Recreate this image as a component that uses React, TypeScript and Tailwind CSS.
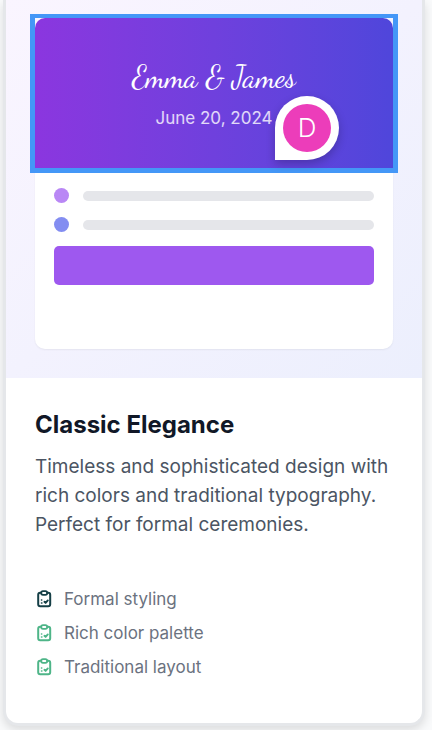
const features = [
  { label: "Formal styling", tone: "text-[#153f46]" },
  { label: "Rich color palette", tone: "text-[#4eb588]" },
  { label: "Traditional layout", tone: "text-[#4eb588]" },
];

function ClipboardIcon({ tone }: { tone: string }) {
  return (
    <svg
      viewBox="0 0 16 20"
      className={`h-5 w-4 shrink-0 ${tone}`}
      fill="none"
      stroke="currentColor"
      strokeWidth="2"
      strokeLinecap="round"
      strokeLinejoin="round"
      aria-hidden="true"
    >
      <path d="M5 3.8H4.2C3 3.8 2.2 4.6 2.2 5.8v9.4c0 1.200.8 2 2 2h8c1.200 0 2-.8 2-2V5.800c0-1.200-.8-2-2-2H11.400" />
      <rect x="5.2" y="2.200" width="6" height="3.600" rx="1.800" strokeWidth="1.800" />
      <path d="M8.400 12.800l1.200 1.100 2.200-2.500" strokeWidth="1.900" />
      <path d="M5.500 11h.2M5.500 14h.4" strokeWidth="1.600" />
    </svg>
  );
}

function CommentPin() {
  return (
    <div className="absolute top-[78px] left-[240px] flex size-16 items-center justify-center rounded-full rounded-bl-none bg-white shadow-[0_4px_10px_rgba(0,0,0,0.22)]">
      <div className="flex size-12 items-center justify-center rounded-full bg-[#ec3dba] text-[26px] leading-8 font-light text-white">
        D
      </div>
    </div>
  );
}

function Preview() {
  return (
    <div className="bg-linear-to-br from-[#faf5ff] to-[#eceffd] px-[29px] pt-[18px] pb-[29px]">
      <div className="h-[331px] rounded-[10px] bg-white shadow-[0_1px_2px_rgba(0,0,0,0.06)]">
        <div className="relative z-10">
          <div className="flex h-[150px] flex-col items-center rounded-t-[10px] bg-linear-to-r from-[#8b36df] to-[#4f46db] pt-10 text-center">
            <p className="font-['Dancing_Script','Liberation_Serif',cursive] text-[30px] leading-[38px] text-white">
              Emma &amp; James
            </p>
            <p className="mt-[10px] text-[17px] leading-6 text-white/80">June 20, 2024</p>
          </div>
          <div className="pointer-events-none absolute -top-1 -right-[5px] -bottom-[5px] -left-[5px] border-[5px] border-t-4 border-[#4497f7]" />
          <CommentPin />
        </div>
        <div className="flex flex-col gap-[14px] px-[19px] pt-5">
          <div className="flex items-center gap-[14px]">
            <span className="size-[15px] rounded-full bg-[#b987f5]" />
            <span className="h-[10px] flex-1 rounded-full bg-[#e5e6ea]" />
          </div>
          <div className="flex items-center gap-[14px]">
            <span className="size-[15px] rounded-full bg-[#838df1]" />
            <span className="h-[10px] flex-1 rounded-full bg-[#e5e6ea]" />
          </div>
          <div className="h-[39px] rounded-[5px] bg-[#9e58ef]" />
        </div>
      </div>
    </div>
  );
}

export default function App() {
  return (
    <main className="min-h-screen overflow-hidden bg-[#f9fafb] pr-[7px] pb-1 pl-[3px] font-['Inter',sans-serif]">
      <article className="overflow-hidden rounded-b-[15px] border-[3px] border-t-0 border-[#e5e7ea] bg-white shadow-[0_4px_10px_rgba(0,0,0,0.12)]">
        <Preview />
        <div className="px-[29px] pt-[31px] pb-11">
          <h2 className="text-[24px] leading-8 font-bold text-[#111827]">Classic Elegance</h2>
          <p className="mt-[11px] text-[19px] leading-[29px] text-[#4b5563]">
            Timeless and sophisticated design with rich colors and traditional typography. Perfect for formal
            ceremonies.
          </p>
          <ul className="mt-12 flex flex-col gap-[10px]">
            {features.map((f) => (
              <li key={f.label} className="flex items-center gap-3 pl-px text-[17px] leading-6 text-[#6b7280]">
                <ClipboardIcon tone={f.tone} />
                {f.label}
              </li>
            ))}
          </ul>
        </div>
      </article>
    </main>
  );
}
